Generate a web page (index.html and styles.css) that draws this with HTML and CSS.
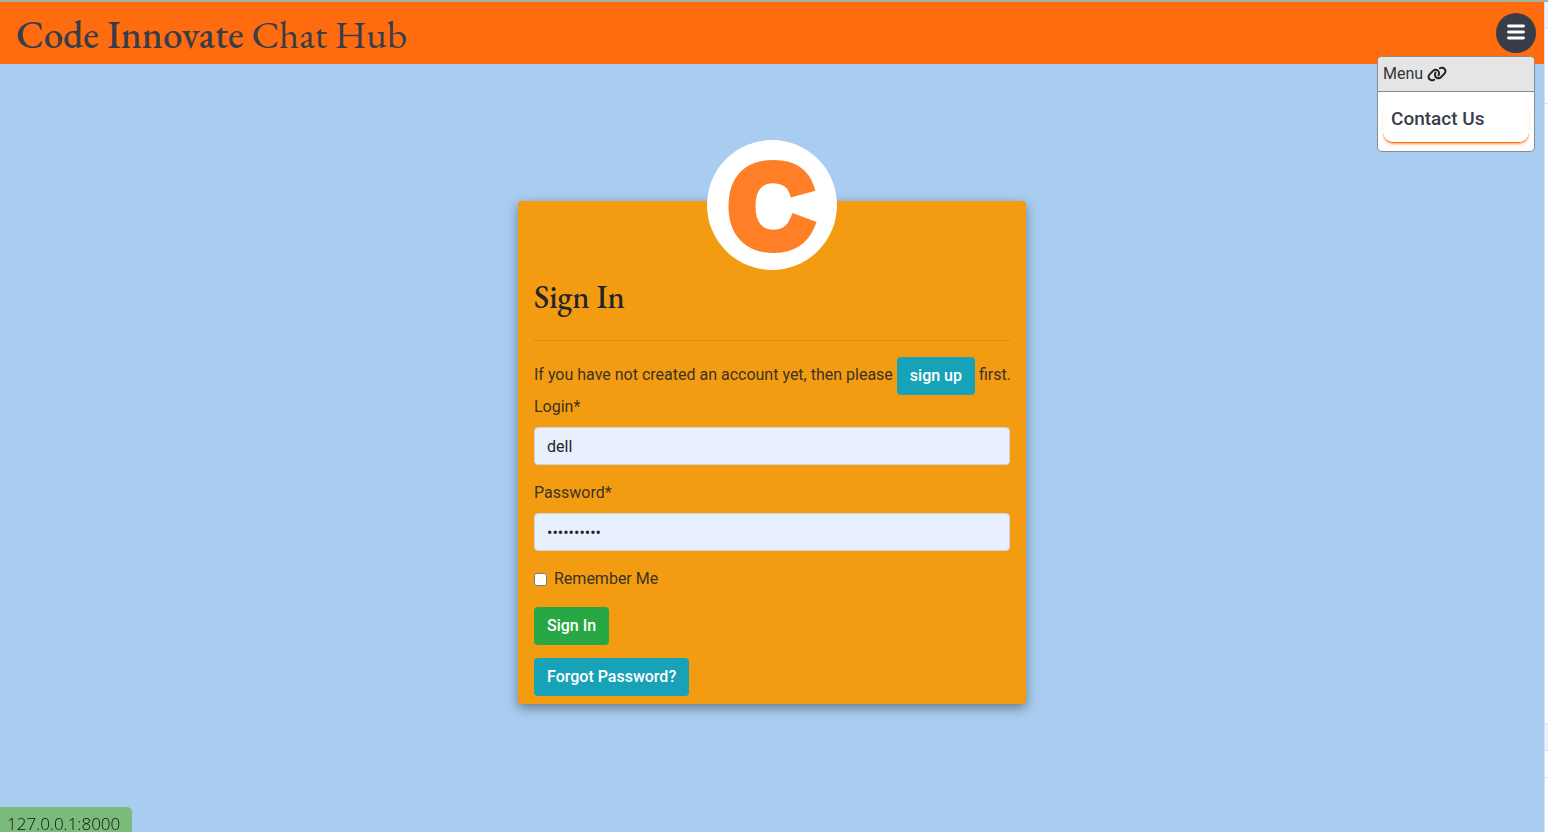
FILE: index.html
```html
<!DOCTYPE html>
<html lang="en">
<head>
<meta charset="utf-8">
<title>Code Innovate Chat Hub</title>
<meta name="viewport" content="width=device-width, initial-scale=1">
<link rel="stylesheet" href="styles.css">
</head>
<body>
<div class="shell">
  <div class="page">
    <header class="topbar">
      <h1 class="brand"><span class="brand-strong">Code Innovate</span> Chat Hub</h1>
      <div class="menu">
        <button class="menu-toggle" type="button" aria-label="Toggle menu" aria-expanded="true">
          <svg width="18" height="16" viewBox="0 0 18 16" aria-hidden="true"><path d="M1.500 2H16.500M1.500 8H16.500M1.500 14H16.500" stroke="#fff" stroke-width="2.800" stroke-linecap="round"/></svg>
        </button>
        <nav class="menu-panel" aria-label="Menu">
          <div class="menu-title">Menu
            <svg class="link-icon" width="20" height="16" viewBox="0 0 640 512" aria-hidden="true"><path fill="currentColor" d="M579.8 267.7c56.5-56.5 56.5-148 0-204.5c-50-50-128.8-56.5-186.3-15.4l-1.6 1.1c-14.4 10.3-17.7 30.3-7.4 44.6s30.3 17.7 44.6 7.4l1.6-1.1c32.1-22.9 76-19.3 103.8 8.6c31.5 31.5 31.5 82.5 0 114L422.3 334.8c-31.5 31.5-82.5 31.5-114 0c-27.9-27.9-31.5-71.8-8.6-103.8l1.1-1.6c10.3-14.4 6.9-34.4-7.4-44.6s-34.4-6.9-44.6 7.4l-1.1 1.6C206.5 251.2 213 330 263 380c56.5 56.5 148 56.5 204.5 0L579.8 267.7zM60.2 244.3c-56.5 56.5-56.5 148 0 204.5c50 50 128.8 56.5 186.3 15.4l1.6-1.1c14.4-10.3 17.7-30.3 7.4-44.6s-30.3-17.7-44.6-7.4l-1.6 1.1c-32.1 22.9-76 19.3-103.8-8.6C74 372 74 321 105.500 289.500L217.700 177.200c31.500-31.500 82.500-31.500 114 0c27.900 27.900 31.500 71.800 8.600 103.900l-1.100 1.600c-10.300 14.400-6.900 34.400 7.400 44.600s34.400 6.900 44.600-7.400l1.100-1.600C433.500 260.800 427 182 377 132c-56.500-56.500-148-56.500-204.500 0L60.200 244.300z"/></svg>
          </div>
          <a class="menu-link" href="#contact">Contact Us</a>
        </nav>
      </div>
    </header>
    <main class="content">
      <section class="card">
        <svg class="logo" width="130" height="130" viewBox="0 0 130 130" role="img" aria-label="Code Innovate">
          <circle cx="65" cy="65" r="65" fill="#fff"/>
          <text class="logo-letter" x="64" y="107" text-anchor="middle">C</text>
        </svg>
        <h2 class="card-title">Sign In</h2>
        <hr class="rule">
        <p class="intro">If you have not created an account yet, then please <a class="btn btn-info" href="#signup">sign up</a> first.</p>
        <form class="form">
          <div class="field">
            <label for="login">Login*</label>
            <input class="text-input" id="login" type="text" value="dell">
          </div>
          <div class="field">
            <label for="password">Password*</label>
            <input class="text-input" id="password" type="password" value="abcdefghij">
          </div>
          <div class="check">
            <input class="check-input" id="remember" type="checkbox">
            <label for="remember">Remember Me</label>
          </div>
          <div class="actions">
            <button class="btn btn-success" type="submit">Sign In</button>
            <a class="btn btn-info" href="#reset">Forgot Password?</a>
          </div>
        </form>
      </section>
    </main>
  </div>
  <aside class="edge" aria-hidden="true">
    <div class="edge-head"></div>
    <div class="edge-row"></div>
    <div class="edge-body"></div>
    <div class="edge-tab"></div>
    <div class="edge-line"></div>
    <div class="edge-foot"></div>
  </aside>
</div>
<div class="status">127.0.0.1:8000</div>
</body>
</html>
```
FILE: styles.css
```css
* { box-sizing: border-box; }

body {
  margin: 0;
  min-height: 100vh;
  display: flex;
  overflow: hidden;
  border-top: 2px solid #a0b29b;
  background: #a9cdf0;
  color: #212529;
  font: 400 16px/24px Roboto, "Liberation Sans", sans-serif;
}

.shell { display: flex; flex: 1; }
.page { flex: 1; display: flex; flex-direction: column; }

.topbar {
  display: flex;
  align-items: center;
  justify-content: space-between;
  height: 62px;
  padding: 0 8px 0 16px;
  background: #ff6b0f;
}
.brand {
  margin: 0;
  padding-top: 4px;
  color: #383d4a;
  font: 400 39px/48px "EB Garamond", "Liberation Serif", serif;
}
.brand-strong { font-weight: 500; }

.menu { position: relative; }
.menu-toggle {
  display: flex;
  align-items: center;
  justify-content: center;
  width: 40px;
  height: 40px;
  padding: 0 0 2px;
  border: 0;
  border-radius: 50%;
  background: #383d4a;
}
.menu-panel {
  position: absolute;
  top: 43px;
  right: 1px;
  width: 158px;
  border: 1px solid #8b8b8b;
  border-radius: 5px;
  background: #fff;
  color: #33363a;
  overflow: hidden;
}
.menu-title {
  display: flex;
  align-items: center;
  gap: 4px;
  height: 35px;
  padding: 0 5px 1px;
  border-bottom: 1px solid #8b8b8b;
  background: #e5e5e5;
}
.link-icon { color: #212529; }
.menu-link {
  display: block;
  margin: 8px 5px;
  padding: 5px 8px 12px;
  height: 43px;
  border-bottom: 1px solid #ff6b0f;
  border-radius: 10px;
  box-shadow: 0 2px 3px -1px #ff9a5c;
  color: #383d4a;
  font-size: 19px;
  font-weight: 500;
  line-height: 28px;
  text-decoration: none;
}

.content { display: flex; justify-content: center; align-items: flex-start; padding-top: 137px; }
.card {
  display: flex;
  flex-direction: column;
  width: 508px;
  padding: 0 16px 8px;
  border-radius: 4px;
  background: #f39c12;
  color: #3a3324;
  box-shadow: 0 4px 12px rgba(0, 0, 0, .4);
}
.logo { align-self: center; margin-top: -61px; overflow: visible; }
.logo-letter {
  fill: #ff7f27;
  stroke: #ff7f27;
  stroke-width: 10px;
  font: 700 117px "Liberation Sans", sans-serif;
}
.card-title {
  margin: 8px 0;
  color: #212529;
  font: 500 32px/38px "EB Garamond", "Liberation Serif", serif;
}
.rule { width: 100%; margin: 16px 0; border: 0; border-top: 1px solid rgba(0, 0, 0, .1); }
.intro { margin: 0; white-space: nowrap; line-height: 32px; }
.intro .btn { vertical-align: middle; }

.btn {
  display: inline-block;
  padding: 6px 12px;
  border: 1px solid transparent;
  border-radius: 4px;
  color: #fff;
  font: 500 16px/24px Roboto, "Liberation Sans", sans-serif;
  text-decoration: none;
}
.btn-info { background: #17a2b8; }
.btn-success { background: #28a745; }

.form { display: flex; flex-direction: column; gap: 16px; }
.field { display: flex; flex-direction: column; gap: 8px; }
.text-input {
  width: 100%;
  height: 38px;
  padding: 6px 12px;
  border: 1px solid #ced4da;
  border-radius: 4px;
  background: #e8f0fe;
  color: #212529;
  font: 400 16px/24px Roboto, "Liberation Sans", sans-serif;
}
.check { display: flex; align-items: center; gap: 7px; }
.check-input { width: 13px; height: 13px; margin: 0; }
.actions { display: flex; flex-direction: column; align-items: flex-start; gap: 13px; }

.edge {
  display: flex;
  flex-direction: column;
  width: 4px;
  border-left: 1px solid #d3e0fb;
  background: #fff;
}
.edge-head { height: 27px; border-bottom: 1px solid #d3e0fb; background: #f0f2f9; }
.edge-row { height: 75px; border-bottom: 1px solid #d3e0fb; }
.edge-body { flex: 1; }
.edge-tab { height: 28px; border: 1px solid #d3e0fb; border-width: 1px 0; background: #f0f2f9; }
.edge-line { height: 27px; border-bottom: 1px solid #d3e0fb; }
.edge-foot { height: 54px; }

.status {
  position: fixed;
  left: 0;
  bottom: 0;
  padding: 8px 12px 0 7px;
  border-radius: 0 5px 0 0;
  background: #7aba7b;
  color: #111;
  font: 300 17px/17px "Open Sans", "Noto Sans", sans-serif;
}
```
